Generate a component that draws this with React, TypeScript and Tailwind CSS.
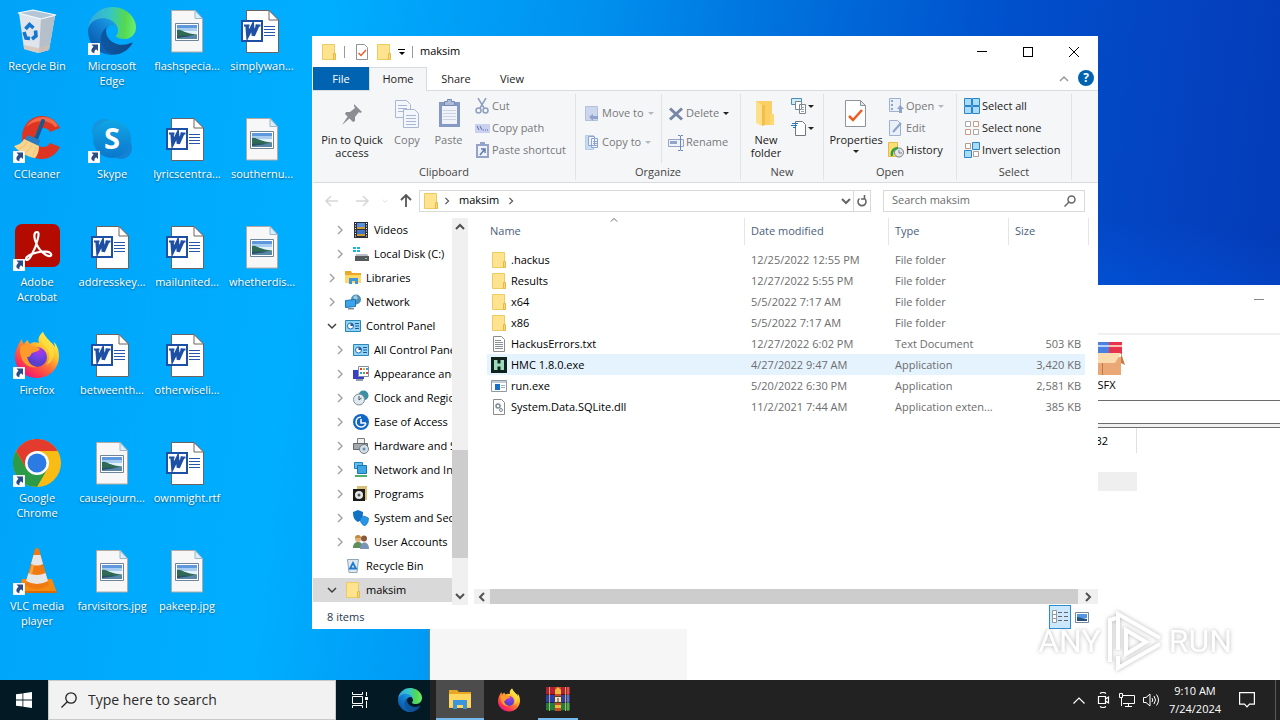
// src/App.tsx
import clsx from 'clsx'
import React from 'react'

type IconProps = { className?: string }

/* ---------- app logos ---------- */

const EdgeLogo: React.FC<IconProps> = ({ className }) => (
  <svg viewBox="0 0 256 256" className={className} aria-hidden="true">
    <defs>
      <linearGradient id="edgeDark" x1="60" y1="177" x2="240" y2="177" gradientUnits="userSpaceOnUse">
        <stop offset="0" stopColor="#0c59a4" />
        <stop offset="1" stopColor="#114a8b" />
      </linearGradient>
      <linearGradient id="edgeMid" x1="155" y1="100" x2="45" y2="220" gradientUnits="userSpaceOnUse">
        <stop offset="0" stopColor="#1b9de2" />
        <stop offset="0.4" stopColor="#1280d2" />
        <stop offset="1" stopColor="#0b5cae" />
      </linearGradient>
      <linearGradient id="edgeTop" x1="10" y1="90" x2="250" y2="110" gradientUnits="userSpaceOnUse">
        <stop offset="0" stopColor="#35a9e0" />
        <stop offset="0.45" stopColor="#36c6c4" />
        <stop offset="0.8" stopColor="#55d94f" />
        <stop offset="1" stopColor="#66eb6e" />
      </linearGradient>
    </defs>
    <g transform="translate(-4.63 -4.92)">
      <path
        fill="url(#edgeDark)"
        d="M235.68 195.46a93.73 93.73 0 0 1-10.54 4.71 101.87 101.87 0 0 1-35.9 6.46c-47.32 0-88.54-32.55-88.54-74.32A31.48 31.48 0 0 1 117.13 105c-42.8 1.8-53.8 46.4-53.8 72.53 0 73.88 68.09 81.37 82.76 81.37 7.91 0 19.84-2.3 27-4.56l1.31-.44a128.34 128.34 0 0 0 66.6-52.8 4 4 0 0 0-5.32-5.64Z"
      />
      <path
        fill="url(#edgeMid)"
        d="M110.34 246.34A79.2 79.2 0 0 1 87.6 225a80.72 80.72 0 0 1 29.53-120c3.12-1.47 8.45-4.13 15.54-4a32.35 32.35 0 0 1 25.69 13 31.88 31.88 0 0 1 6.36 18.66c0-.21 24.46-79.6-80-79.6-43.9 0-80 41.66-80 78.21a130.15 130.15 0 0 0 12.11 56 128 128 0 0 0 156.38 67.11 75.55 75.55 0 0 1-62.78-8Z"
      />
      <path
        fill="url(#edgeTop)"
        d="M156.94 153.78c-.81 1.05-3.3 2.5-3.3 5.66 0 2.61 1.7 5.12 4.72 7.23 14.38 10 41.49 8.68 41.56 8.68a59.56 59.56 0 0 0 30.27-8.35A61.38 61.38 0 0 0 260.63 114c.26-22.41-8-37.31-11.34-43.91C228.09 28.76 182.35 5 132.61 5a128 128 0 0 0-128 126.2c.48-36.54 36.8-66.05 80-66.05 3.5 0 23.46.34 42 10.07 16.34 8.58 24.9 18.94 30.85 29.21 6.18 10.67 7.28 24.15 7.28 29.52s-2.74 13.33-7.8 19.83Z"
      />
    </g>
  </svg>
)

const FirefoxLogo: React.FC<IconProps> = ({ className }) => (
  <svg viewBox="0 0 48 48" className={className} aria-hidden="true">
    <defs>
      <linearGradient id="ffBody" x1="38" y1="6" x2="10" y2="44" gradientUnits="userSpaceOnUse">
        <stop offset="0" stopColor="#fff44f" />
        <stop offset="0.3" stopColor="#ffc02e" />
        <stop offset="0.55" stopColor="#ff7139" />
        <stop offset="0.8" stopColor="#ff3750" />
        <stop offset="1" stopColor="#e31587" />
      </linearGradient>
      <radialGradient id="ffGlobe" cx="26" cy="20" r="12" gradientUnits="userSpaceOnUse">
        <stop offset="0" stopColor="#b833e1" />
        <stop offset="0.6" stopColor="#7542e5" />
        <stop offset="1" stopColor="#5b3fc8" />
      </radialGradient>
    </defs>
    <path
      fill="url(#ffBody)"
      d="M30 1c-5 4-5 8-4 11-3-1-7-1-9 1-1-1-2-2-2-4-2 1-3 2-4 4-1-1-2-2-2-5-4 5-7 12-7 18 0 12 10 21 22 21s22-9 22-22c0-6-2-11-5-14 0 2 1 3 1 5C39 11 33 8 30 1z"
    />
    <circle cx="24" cy="26" r="10" fill="url(#ffGlobe)" />
    <path fill="#ff9a2b" d="M7 16c4-3 9-3 12 0 3-1 6 0 8 2-2 3-6 3-8 4-2 2-1 4-5 4 1 5 4 9 10 10-9 2-18-5-17-20z" />
    <path fill="#ffdf3f" opacity="0.75" d="M30 1c-5 8 1 13 5 18 3 5 1 12-2 15 7-3 9-10 7-17C38 10 32 8 30 1z" />
  </svg>
)

const ChromeLogo: React.FC<IconProps> = ({ className }) => (
  <svg viewBox="0 0 48 48" className={className} aria-hidden="true">
    <circle cx="24" cy="24" r="24" fill="#f9bc15" />
    <path fill="#e33b2e" d="M24 24L3.2 12A24 24 0 0 1 44.8 12H24z" />
    <path fill="#2d9a48" d="M3.2 12A24 24 0 0 0 24 48L34.4 30 24 24 13.6 30z" />
    <path fill="#e33b2e" d="M3.2 12L13.6 30 24 12z" />
    <circle cx="24" cy="24" r="12" fill="#fff" />
    <circle cx="24" cy="24" r="9.5" fill="#2c7be5" />
  </svg>
)

const RecycleLogo: React.FC<IconProps> = ({ className }) => (
  <svg viewBox="0 0 48 48" className={className} aria-hidden="true">
    <path fill="#dfe5ea" d="M6 6L42 9 36 43 25 46 11 42z" />
    <path fill="#b4bfc9" d="M28 11L42 9 36 43 26 46z" />
    <path fill="#b5c7d6" d="M5 6L20 3 43 8 28 12z" stroke="#f7fbff" strokeWidth="1.2" />
    <path fill="#d6bfb0" opacity="0.7" d="M11 38L25 41 36 38 35 43 25 46 11 42z" />
    <g fill="none" stroke="#1476cf" strokeWidth="3.6">
      <path d="M12.500 22l4-4.500 4 3.500" />
      <path d="M11 25l2 6 4 .5" />
      <path d="M22.500 23.500l.5 5.500-4 3" />
    </g>
  </svg>
)

const CCleanerLogo: React.FC<IconProps> = ({ className }) => (
  <svg viewBox="0 0 48 48" className={className} aria-hidden="true">
    <path
      fill="#de3522"
      d="M47 13C43 5 36 1 29 1 17 1 9 11 9 23s8 21 20 21c7 0 14-4 18-12l-10-4c-2 3-4 4-7 4-5 0-8-4-8-9s3-10 8-10c3 0 6 1 7 4z"
    />
    <path fill="#f26a4b" d="M13 12C17 5 24 2 30 2c6 0 12 3 15 9l-3 1C37 5 23 4 13 12z" />
    <path d="M30 6L23 24" stroke="#1d588c" strokeWidth="4" strokeLinecap="round" />
    <path fill="#2b7bc0" d="M15 20l12 5-2 7-14-7z" />
    <path fill="#f8d48d" d="M11 24l15 7c0 6-2 10-4 12-8-1-16-6-21-12 4-1 8-3 10-7z" />
    <path fill="none" stroke="#e8bd74" strokeWidth="0.8" d="M14 27c-2 4-5 6-8 7M19 30c-2 4-4 6-7 8M23 32c-1 4-2 7-4 9" />
  </svg>
)

const SkypeLogo: React.FC<IconProps> = ({ className }) => (
  <svg viewBox="0 0 48 48" className={className} aria-hidden="true">
    <defs>
      <linearGradient id="skypeBlue" x1="0" y1="0" x2="0" y2="1">
        <stop offset="0" stopColor="#10a6e6" />
        <stop offset="1" stopColor="#0b77cc" />
      </linearGradient>
    </defs>
    <circle cx="16" cy="16" r="12" fill="#1495dc" />
    <circle cx="33" cy="33" r="11" fill="#1583d3" />
    <circle cx="24" cy="24" r="19" fill="url(#skypeBlue)" />
    <text x="24" y="34" textAnchor="middle" fontFamily="Open Sans, sans-serif" fontWeight="700" fontSize="29" fill="#fff">
      S
    </text>
  </svg>
)

const AcrobatLogo: React.FC<IconProps> = ({ className }) => (
  <svg viewBox="0 0 48 48" className={className} aria-hidden="true">
    <rect x="2" y="1" width="45" height="43" rx="7" fill="#b30b00" />
    <path
      fill="none"
      stroke="#fff"
      strokeWidth="2.2"
      d="M24 9c-3 0-3 4-2 8 2 7 6 12 11 15 4 2 6 1 5-1-1-3-8-3-14-1.500-6 1.500-11 4-11 6.500 0 2 3 1 5-3 3-5 6-13 7-18 .8-4 1-6-1-6z"
    />
  </svg>
)

const VlcLogo: React.FC<IconProps> = ({ className }) => (
  <svg viewBox="0 0 48 48" className={className} aria-hidden="true">
    <path fill="#f58a12" d="M9 32h30l5 14H6z" />
    <path fill="#d96a06" d="M6 44h38v2H6z" />
    <path fill="#f07a10" d="M22 2q2-2 4 0l10 36q-12 8-24 0z" />
    <path fill="#e6e6e6" d="M20.500 8h7l2.500 9q-6 3-12 0z" />
    <path fill="#e6e6e6" d="M15.500 26q8.500 4 17 0l2.500 8q-11 6-22 0z" />
    <path fill="#ffb254" opacity="0.7" d="M19 17l2 1-2 10-3-1z" />
  </svg>
)

const ImageFile: React.FC<IconProps> = ({ className }) => (
  <svg viewBox="0 0 48 48" className={className} aria-hidden="true">
    <path fill="#f7f7f7" stroke="#b5aaa3" d="M8.500 3.500H32l7.500 8v33.500h-31z" />
    <path fill="#d9eefc" stroke="#9fb6c6" d="M32 3.500v8h7.500z" />
    <path fill="#fff" stroke="#6f8496" d="M12.500 16.500h23v17h-23z" />
    <path fill="#5f98dc" d="M14 18h20v4H14z" />
    <path fill="#a9cdf0" d="M14 21h20v3H14z" />
    <path fill="#e4f0fa" d="M14 24h20v3H14z" />
    <path fill="#5a86a8" d="M14 28h20v4H14z" />
    <path fill="#2f6b54" d="M14 23c3-1 5 1 8 2s6 2 12 2.500V28c-6 0-9 2-20 2z" />
    <path fill="#2b4f63" d="M14 29q8-1 14 0l-14 2z" />
  </svg>
)

const WordFile: React.FC<IconProps> = ({ className }) => (
  <svg viewBox="0 0 48 48" className={className} aria-hidden="true">
    <path fill="#fff" stroke="#6a6460" d="M8.500 3.500H31l9.500 9.500v32.500h-32z" />
    <path fill="#fff" stroke="#6a6460" d="M31 3.500V13h9.500z" />
    <path stroke="#2a56a8" d="M26 19.500h11M26 22.500h11M26 25.500h11M26 28.500h11" />
    <path fill="#fff" stroke="#1d4fa5" strokeWidth="2" d="M4 14h20v20H4z" />
    <path fill="none" stroke="#1d4fa5" strokeWidth="3.400" d="M9 18l.8 10.500L14.500 19l.8 9.500L20 18" />
    <path stroke="#1d4fa5" strokeWidth="1.800" d="M6 18.500h5.500M17.500 18.500h5" />
  </svg>
)

const ShortcutBadge = () => (
  <svg viewBox="0 0 12 12" className="absolute bottom-0 left-0 size-3" aria-hidden="true">
    <path fill="#fff" stroke="#c9cdd4" strokeWidth="0.5" d="M0 0h12v12H0z" />
    <path fill="#2b4d87" d="M3.500 1.500H10V8L8 6.200C6.500 7.500 6 8.500 6.500 10.500 2.500 9 2.500 6.500 5.500 3.800z" />
  </svg>
)

const WinrarLogo: React.FC<IconProps> = ({ className }) => (
  <svg viewBox="0 0 24 24" className={className} aria-hidden="true">
    <path fill="#b01f35" d="M0 0h24v8H0z" />
    <path fill="#2a3fae" d="M0 8h24v8H0z" />
    <path fill="#1f7d42" d="M0 16h24v8H0z" />
    <path stroke="#000" strokeOpacity="0.45" d="M0 7.500h24M0 15.500h24M0 23.500h24" />
    <path stroke="#e0c15e" strokeOpacity="0.8" d="M3.500 0v24M19.500 0v24M22 0v24" />
    <path fill="#cc4a26" d="M9 0h6v24H9z" />
    <path fill="#f0b93c" d="M9 3l3-3 3 3v4H9zM9 18h6v3H9z" />
    <path fill="#e8e0d0" stroke="#5a3a20" d="M8.500 9.500h7v6h-7z" />
    <path stroke="#5a3a20" d="M12 11v4" />
  </svg>
)

/* ---------- small 16px icons ---------- */

const FolderIcon: React.FC<IconProps> = ({ className = 'size-4' }) => (
  <svg viewBox="0 0 16 16" className={className} aria-hidden="true">
    <path fill="#ffe38f" stroke="#eccb62" d="M1.500.5h12v15h-12z" />
    <path fill="#fbd76c" stroke="#e3ba4c" d="M12.500 9.500h2v6h-2z" />
  </svg>
)

const ExplorerIcon: React.FC<IconProps> = ({ className = 'size-4' }) => (
  <svg viewBox="0 0 24 24" className={className} aria-hidden="true">
    <path fill="#e8a723" d="M1 3h8l2 2h12v5H1z" />
    <path fill="#ffd75e" d="M1 7h22v14H1z" />
    <path fill="#3b94dc" d="M5 13h14v9h-4v-4H9v4H5z" />
    <path fill="#f8c544" d="M1 20h4v1H1zM19 20h4v1h-4z" />
  </svg>
)

const NAV_ICONS: Record<string, React.ReactNode> = {
  videos: (
    <>
      <path fill="#2c2f3a" d="M1 0h14v16H1z" />
      <path stroke="#fff" strokeDasharray="1 1.500" d="M2.500 1v14M13.500 1v14" />
      <path fill="#5b8fd9" d="M4 1h8v6H4z" />
      <path fill="#c99a36" d="M4 5h8v2H4zM4 12h8v2H4z" />
      <path fill="#3f74c6" d="M4 8h8v4H4z" />
    </>
  ),
  disk: (
    <>
      <path fill="#1fb3d8" d="M0 1h3v2H0zM4 1h3v2H4zM0 4h3v2H0zM4 4h3v2H4z" />
      <path fill="#b9bec2" d="M3 8h11l2 3H2z" />
      <path fill="#55595d" d="M2 10h14v5H2z" />
      <path fill="#5fe07a" d="M12 12h2v1h-2z" />
    </>
  ),
  libraries: (
    <>
      <path fill="#e9a92b" d="M0 1h6l1 2h9v4H0z" />
      <path fill="#ffd866" d="M0 5h16v8H0z" />
      <path fill="#3f97dd" d="M4 8h9v6h-3v-3H7v3H4z" />
    </>
  ),
  network: (
    <>
      <circle cx="11" cy="5.500" r="5" fill="#4f8fb5" />
      <path fill="#9bcbe0" d="M8 3l3-2 2 3-3 3z" />
      <path fill="#3aa5ea" stroke="#1c75b5" d="M.5 6.500l10-1v7l-10 1z" />
      <path fill="#7d8c96" d="M3 14h6v1.500H3z" />
    </>
  ),
  control: (
    <>
      <path fill="#8fd3f7" stroke="#2c87b8" d="M.5 2.500h15v11H.5z" />
      <circle cx="5.500" cy="8" r="3" fill="#fff" stroke="#2b6fae" />
      <path fill="#1d5b9b" d="M5.500 8V5a3 3 0 0 1 3 3z" />
      <path stroke="#1d5b9b" d="M10 5.500h4M10 8h4M10 10.500h4" />
    </>
  ),
  appearance: (
    <>
      <path fill="#3a3fc4" d="M0 4h11v9H0z" />
      <path fill="#fff" stroke="#7f8fa4" d="M5.500.5h10v10h-10z" />
      <path fill="#e23d3d" d="M7 2h2v2H7zM13 6h2v2h-2z" />
      <path fill="#f0b429" d="M10 2h2v2h-2z" />
      <path fill="#3b9be0" d="M13 2h2v2h-2zM7 6h2v2H7z" />
      <path fill="#4fae4a" d="M10 6h2v2h-2z" />
      <path fill="#8f9dab" d="M3 13h7v2H3z" />
    </>
  ),
  clock: (
    <>
      <circle cx="10.500" cy="5.500" r="5" fill="#3c8ea5" />
      <circle cx="6" cy="9.500" r="5.500" fill="#dfe8ee" stroke="#7e909c" />
      <path fill="none" stroke="#46545f" d="M6 6v4l2.500-2" />
    </>
  ),
  ease: (
    <>
      <circle cx="8" cy="8" r="8" fill="#1267c4" />
      <path fill="none" stroke="#fff" strokeWidth="1.500" d="M8 3a5 5 0 1 0 5 6M8 5v4h5" />
    </>
  ),
  hardware: (
    <>
      <path fill="#f2f2f2" stroke="#7c7c7c" d="M4.500.5h7v5h-7z" />
      <path fill="#a4a9ad" stroke="#62676b" d="M.5 5.500h14v6H.500z" />
      <circle cx="11" cy="11" r="4.500" fill="#d7dde2" stroke="#717d87" />
      <circle cx="11" cy="11" r="1.500" fill="#5c93c1" />
    </>
  ),
  internet: (
    <>
      <path fill="#66bff2" stroke="#1d83bf" d="M1.500.5h8v6h-8z" />
      <path fill="#3fa6e6" stroke="#1a76ae" d="M4.500 3.500h9v8h-9z" />
      <path fill="#4fae6a" d="M2 13h12v2H2z" />
    </>
  ),
  programs: (
    <>
      <path fill="#d9c07a" d="M4 0h10v14H4z" />
      <path fill="#1b1b1b" d="M0 3h12v12H0z" />
      <circle cx="6" cy="9" r="4" fill="#e6e6e6" />
      <circle cx="6" cy="9" r="1.500" fill="#555" />
    </>
  ),
  system: (
    <>
      <path fill="#1273c4" d="M0 2l5-2 5 2c0 5-1 8-5 10C1 10 0 7 0 2z" />
      <path fill="#2597e6" stroke="#0e62a8" strokeWidth="0.6" d="M7 8l4-2 4.500 2c0 4-1 6-4 8-3-2-4.500-4-4.500-8z" />
    </>
  ),
  users: (
    <>
      <circle cx="5" cy="5" r="3" fill="#e2b07c" />
      <path fill="#c38a38" d="M2 4a3 3 0 0 1 6 0z" />
      <path fill="#5c8f5a" d="M0 14c0-4 2-6 5-6s5 2 5 6z" />
      <circle cx="11" cy="4.500" r="3" fill="#8a5a3c" />
      <path fill="#7c93b8" d="M7 15c0-4 2-6.500 4.500-6.500S16 11 16 15z" />
    </>
  ),
  recycle: (
    <>
      <path fill="#dfe9f1" stroke="#93a5b3" d="M2.500 1.500h11l-1.500 13H4z" />
      <path fill="none" stroke="#1b79cf" strokeWidth="1.800" d="M8 5l3 5.500H5z" />
    </>
  ),
  folder: (
    <>
      <path fill="#ffe38f" stroke="#eccb62" d="M1.500.5h12v15h-12z" />
      <path fill="#fbd76c" stroke="#e3ba4c" d="M12.500 9.500h2v6h-2z" />
    </>
  ),
}

const FILE_ICONS: Record<string, React.ReactNode> = {
  folder: NAV_ICONS.folder,
  text: (
    <>
      <path fill="#fff" stroke="#8b8b8b" d="M2.500.5h8l3 3v12h-11z" />
      <path stroke="#8a8f94" d="M4 4.500h6M4 6.500h8M4 8.500h8M4 10.500h8M4 12.500h8" />
    </>
  ),
  hmc: (
    <>
      <path fill="#10221c" d="M0 0h16v16H0z" />
      <path fill="#9fd9bd" d="M3 3h3.500v3.500h3V3H13v10H9.500V9.500h-3V13H3z" />
    </>
  ),
  exe: (
    <>
      <path fill="#fff" stroke="#8f9aa5" d="M.5 2.500h15v11H.5z" />
      <path fill="#c5ced6" d="M1 3h14v2H1z" />
      <path fill="#1871c9" d="M4 6h5v6H4z" />
      <path stroke="#9fb1c0" d="M10 7.500h4M10 9.500h4" />
    </>
  ),
  dll: (
    <>
      <path fill="#fff" stroke="#8b8b8b" d="M2.500.5h8l3 3v12h-11z" />
      <circle cx="7" cy="7" r="2" fill="none" stroke="#7c8894" strokeWidth="1.500" />
      <circle cx="10" cy="11" r="1.500" fill="none" stroke="#7c8894" />
    </>
  ),
}

const Small = ({ children }: { children: React.ReactNode }) => (
  <svg viewBox="0 0 16 16" className="size-4 shrink-0" aria-hidden="true">
    {children}
  </svg>
)

const Caret = ({ className }: { className?: string }) => (
  <svg viewBox="0 0 6 3" className={clsx('h-[3px] w-1.5 shrink-0', className)} aria-hidden="true">
    <path fill="currentColor" d="M0 0h6L3 3z" />
  </svg>
)

const Chevron = ({ dir, className }: { dir: 'right' | 'left' | 'up' | 'down'; className?: string }) => {
  const paths = {
    right: 'M3 1l4 4-4 4',
    left: 'M7 1L3 5l4 4',
    up: 'M1 7l4-4 4 4',
    down: 'M1 3l4 4 4-4',
  }
  return (
    <svg viewBox="0 0 10 10" className={clsx('shrink-0', className)} fill="none" stroke="currentColor" aria-hidden="true">
      <path d={paths[dir]} />
    </svg>
  )
}

/* ---------- desktop ---------- */

type Shortcut = { name: string; icon: React.FC<IconProps>; link?: boolean }

const shortcuts: Shortcut[] = [
  { name: 'Recycle Bin', icon: RecycleLogo },
  { name: 'CCleaner', icon: CCleanerLogo, link: true },
  { name: 'Adobe Acrobat', icon: AcrobatLogo, link: true },
  { name: 'Firefox', icon: FirefoxLogo, link: true },
  { name: 'Google Chrome', icon: ChromeLogo, link: true },
  { name: 'VLC media player', icon: VlcLogo, link: true },
  { name: 'Microsoft Edge', icon: EdgeLogo, link: true },
  { name: 'Skype', icon: SkypeLogo, link: true },
  { name: 'addresskey...', icon: WordFile },
  { name: 'betweenth...', icon: WordFile },
  { name: 'causejourn...', icon: ImageFile },
  { name: 'farvisitors.jpg', icon: ImageFile },
  { name: 'flashspecia...', icon: ImageFile },
  { name: 'lyricscentra...', icon: WordFile },
  { name: 'mailunited...', icon: WordFile },
  { name: 'otherwiseli...', icon: WordFile },
  { name: 'ownmight.rtf', icon: WordFile },
  { name: 'pakeep.jpg', icon: ImageFile },
  { name: 'simplywan...', icon: WordFile },
  { name: 'southernu...', icon: ImageFile },
  { name: 'whetherdis...', icon: ImageFile },
]

const DesktopIcons = () => (
  <div className="grid w-max auto-cols-[75px] grid-flow-col grid-rows-[repeat(6,108px)] pt-[7px]">
    {shortcuts.map(({ name, icon: Icon, link }) => (
      <button key={name} className="flex flex-col items-center pr-px leading-[15px] text-white">
        <span className="relative mb-[3px] size-12">
          <Icon className="size-12" />
          {link && <ShortcutBadge />}
        </span>
        <span className="max-w-[70px] [text-shadow:0_1px_2px_rgba(0,0,0,0.5)]">{name}</span>
      </button>
    ))}
  </div>
)

/* ---------- ribbon ---------- */

const Group = ({ title, className, children }: { title: string; className: string; children: React.ReactNode }) => (
  <section className={clsx('flex h-[86px] flex-col border-r border-[#e2e3e4]', className)}>
    <div className="flex h-[71px]">{children}</div>
    <h2 className="text-center leading-[17px] text-[#444]">{title}</h2>
  </section>
)

const BigButton = ({
  label,
  icon,
  className,
  muted,
  caret,
}: {
  label: string
  icon: React.ReactNode
  className: string
  muted?: boolean
  caret?: boolean
}) => (
  <button
    className={clsx('flex flex-col items-center pt-1 leading-[13px]', muted ? 'text-[#77797c]' : 'text-[#222]', className)}
  >
    <svg viewBox="0 0 32 32" className="mb-[3px] size-8" aria-hidden="true">
      {icon}
    </svg>
    {label}
    {caret && <Caret className="mt-1" />}
  </button>
)

const SmallButton = ({
  label,
  icon,
  muted,
  caret,
  tall,
}: {
  label: string
  icon: React.ReactNode
  muted?: boolean
  caret?: 'dark' | 'light'
  tall?: boolean
}) => (
  <button
    className={clsx(
      'flex items-center gap-[2px] whitespace-nowrap',
      tall ? 'h-[29px]' : 'h-[22px]',
      muted ? 'text-[#77797c]' : 'text-[#222]'
    )}
  >
    <Small>{icon}</Small>
    {label}
    {caret && <Caret className={clsx('ml-0.5', caret === 'dark' ? 'text-[#222]' : 'text-[#b5b7ba]')} />}
  </button>
)

const Ribbon = () => (
  <div className="flex h-[92px] border-b border-[#d9dadb] bg-[#f5f6f7] pt-[3px]">
    <Group title="Clipboard" className="w-[263px]">
      <BigButton
        label="Pin to Quick access"
        className="w-[78px]"
        icon={
          <g fill="#8a8d91">
            <path d="M18 6l8 8-2 1-1-1-4 5v4l-2 1-8-8 1-2h4l5-4-1-2z" />
            <path d="M12 18l2 2-8 7z" />
          </g>
        }
      />
      <BigButton
        label="Copy"
        muted
        className="w-8"
        icon={
          <g fill="#f3f6fb" stroke="#a9b8d2">
            <path d="M4.500 2.500h11l4 4v13h-15z" />
            <path d="M7 7.500h9M7 10.500h9M7 13.500h9" />
            <path d="M12.500 11.500h11l4 4v14h-15z" />
            <path d="M15 17.500h10M15 20.500h10M15 23.500h10M15 26.500h10" />
          </g>
        }
      />
      <BigButton
        label="Paste"
        muted
        className="w-[51px]"
        icon={
          <>
            <path fill="#8599c2" d="M6 4h21v25H6z" />
            <path fill="#f0f4fa" d="M9 8h15v18H9z" />
            <path fill="#aebcd5" stroke="#7288b5" d="M11.500 3.500h3v-2h4v2h3v4h-10z" />
            <path stroke="#c9d3e5" d="M10 12.500h13M10 15.500h13M10 18.500h13M10 21.500h13" />
          </>
        }
      />
      <div className="flex flex-col pt-px">
        <SmallButton
          label="Cut"
          muted
          icon={
            <g fill="none" stroke="#8f9fc0" strokeWidth="1.500">
              <path d="M4 0l6 10M12 0L6 10" />
              <circle cx="4.500" cy="12.500" r="2.500" />
              <circle cx="11.500" cy="12.500" r="2.500" />
            </g>
          }
        />
        <SmallButton
          label="Copy path"
          muted
          icon={
            <>
              <path fill="#c9d1ee" d="M1 4h15v9H1z" />
              <path stroke="#5d6cae" d="M3 6l2 4M6 6l2 4M9 10h1M11 10h1M13 10h1" />
            </>
          }
        />
        <SmallButton
          label="Paste shortcut"
          muted
          icon={
            <>
              <path fill="#eef2f9" stroke="#93a4c8" strokeWidth="2" d="M3 3h11v12H3z" />
              <path fill="#93a4c8" d="M6 0h5v3H6z" />
              <path fill="none" stroke="#5f78ae" strokeWidth="1.500" d="M6 13l4-5M7 7h4v4" />
            </>
          }
        />
      </div>
    </Group>

    <Group title="Organize" className="w-[165px]">
      <div className="flex w-[86px] flex-col border-r border-[#e2e3e4] pt-[5px] pl-2">
        <SmallButton
          label="Move to"
          muted
          tall
          caret="light"
          icon={
            <>
              <path fill="#ccd6ec" stroke="#b3c0dc" d="M1.500.5h12v14h-12z" />
              <path fill="#8fa2ca" d="M5 11l4-3v2h5v3H9v2z" />
            </>
          }
        />
        <SmallButton
          label="Copy to"
          muted
          tall
          caret="light"
          icon={
            <>
              <path fill="#c9dcf3" stroke="#b7cbe6" d="M1.500.5h8v14h-8z" />
              <path fill="#f1f5fb" stroke="#8ea6cf" d="M4.500 1.500h6v9h-6zM7.500 3.500h6v9h-6z" />
              <path stroke="#8ea6cf" d="M9 6.500h4M9 8.500h4M9 10.500h4" />
            </>
          }
        />
      </div>
      <div className="flex flex-col pt-[5px] pl-1.5">
        <SmallButton
          label="Delete"
          muted
          tall
          caret="dark"
          icon={<path stroke="#7686a5" strokeWidth="3" d="M2 2.500l12 11M14 2.500l-12 11" />}
        />
        <SmallButton
          label="Rename"
          muted
          tall
          icon={
            <>
              <path fill="#eef2f9" stroke="#93a4c8" d="M.5 4.500h15v7H.5z" />
              <path fill="#93a4c8" d="M2 6h7v3H2z" />
              <path fill="none" stroke="#7287b4" d="M10 .5h2l.5.5.5-.5h2M12.500 1v14M10 15.500h2l.5-.5.5.5h2" />
            </>
          }
        />
      </div>
    </Group>

    <Group title="New" className="w-[83px]">
      <BigButton
        label="New folder"
        className="w-[50px]"
        icon={
          <>
            <path fill="#f9cf66" d="M6 3h16v24H10z" />
            <path fill="#ffe08a" d="M6 3l6 4v21l-6-3z" />
            <path fill="#f3bf4c" d="M12 7h3v20l-3 1z" />
            <path fill="#ffd970" d="M20 16h4v11h-4z" />
          </>
        }
      />
      <div className="flex flex-col pt-px text-[#222]">
        <button aria-label="New item" className="flex h-[22px] items-center gap-px">
          <Small>
            <path fill="#cfeaf8" stroke="#4d8fb4" d="M.5.5h10v6H.5z" />
            <path fill="#fff" stroke="#7a8791" d="M4.500 3.500h6v8h-6zM8.500 6.500h6v9h-6z" />
            <path stroke="#9aa5ae" d="M10 9.500h3M10 11.500h3M10 13.500h3" />
          </Small>
          <Caret />
        </button>
        <button aria-label="Easy access" className="flex h-[22px] items-center gap-px">
          <Small>
            <path fill="#fff" stroke="#6f7880" d="M4.500 1.500h7l3 3v11h-10z" />
            <path stroke="#2477bb" d="M1 3.500h6M0 5.500h6M2 7.500h3" />
          </Small>
          <Caret />
        </button>
      </div>
    </Group>

    <Group title="Open" className="w-[133px]">
      <BigButton
        label="Properties"
        caret
        className="w-[64px]"
        icon={
          <>
            <path fill="#fff" stroke="#8e9499" d="M5.500 2.500h15l5 5v21h-20z" />
            <path fill="#dbe6f0" stroke="#8e9499" d="M20.500 2.500v5h5z" />
            <path fill="none" stroke="#f05a22" strokeWidth="2.500" d="M9 18l4 4 9-10" />
          </>
        }
      />
      <div className="flex flex-col pt-px">
        <SmallButton
          label="Open"
          muted
          caret="light"
          icon={
            <>
              <path fill="#eaf0f8" stroke="#9fb0cf" d="M1.500.5h11v13h-11z" />
              <path fill="#8fa3cb" d="M3 2h2v2H3zM3 6h2v2H3zM3 10h2v2H3zM12 7l4 4h-2v4h-3v-4H9z" />
            </>
          }
        />
        <SmallButton
          label="Edit"
          muted
          icon={
            <>
              <path fill="#eaf0f8" stroke="#9fb0cf" d="M1.500.5h8l3 3v12h-11z" />
              <path stroke="#8fa3cb" strokeWidth="2" d="M5 12l8-9" />
            </>
          }
        />
        <SmallButton
          label="History"
          icon={
            <>
              <path fill="#ffdf75" stroke="#e5ba48" d="M.5.5h9v14h-9z" />
              <circle cx="11" cy="10.500" r="4.500" fill="#e4e7ea" stroke="#777e85" />
              <path fill="none" stroke="#777e85" d="M11 8v3h3" />
              <path fill="none" stroke="#35a13d" strokeWidth="2.500" d="M4 14c-1-5 2-8 6-8" />
            </>
          }
        />
      </div>
    </Group>

    <Group title="Select" className="w-[115px]">
      <div className="flex flex-col pt-px pl-[7px]">
        <SmallButton
          label="Select all"
          icon={
            <path fill="#a9dcfa" stroke="#2a86c8" d="M.5.5h7v7h-7zM8.500.5h7v7h-7zM.5 8.500h7v7h-7zM8.500 8.500h7v7h-7z" />
          }
        />
        <SmallButton
          label="Select none"
          icon={
            <g fill="#fff">
              <path stroke="#a9a9a9" d="M1.500 1.500h5v5h-5zM9.500 9.500h5v5h-5z" />
              <path stroke="#c99a82" d="M9.500 1.500h5v5h-5zM1.500 9.500h5v5h-5z" />
            </g>
          }
        />
        <SmallButton
          label="Invert selection"
          icon={
            <>
              <path fill="#fff" stroke="#b59a90" d="M1.500 1.500h5v5h-5zM9.500 9.500h5v5h-5z" />
              <path fill="#a9dcfa" stroke="#2a86c8" d="M8.500.5h7v7h-7zM.5 8.500h7v7h-7z" />
            </>
          }
        />
      </div>
    </Group>
  </div>
)

/* ---------- navigation tree ---------- */

type NavItem = { label: string; icon: string; depth: 1 | 2; open?: boolean; leaf?: boolean; active?: boolean }

const navItems: NavItem[] = [
  { label: 'Videos', icon: 'videos', depth: 2 },
  { label: 'Local Disk (C:)', icon: 'disk', depth: 2 },
  { label: 'Libraries', icon: 'libraries', depth: 1 },
  { label: 'Network', icon: 'network', depth: 1 },
  { label: 'Control Panel', icon: 'control', depth: 1, open: true },
  { label: 'All Control Panel Items', icon: 'control', depth: 2 },
  { label: 'Appearance and Personalization', icon: 'appearance', depth: 2 },
  { label: 'Clock and Region', icon: 'clock', depth: 2 },
  { label: 'Ease of Access', icon: 'ease', depth: 2 },
  { label: 'Hardware and Sound', icon: 'hardware', depth: 2 },
  { label: 'Network and Internet', icon: 'internet', depth: 2 },
  { label: 'Programs', icon: 'programs', depth: 2 },
  { label: 'System and Security', icon: 'system', depth: 2 },
  { label: 'User Accounts', icon: 'users', depth: 2 },
  { label: 'Recycle Bin', icon: 'recycle', depth: 1, leaf: true },
  { label: 'maksim', icon: 'folder', depth: 1, open: true, active: true },
]

const NavTree = () => (
  <nav className="w-[139px] overflow-hidden">
    <ul>
      {navItems.map(item => (
        <li key={item.label}>
          <button
            className={clsx(
              'flex h-6 w-full items-center overflow-hidden whitespace-nowrap',
              item.depth === 2 ? 'pl-[22px]' : 'pl-[14px]',
              item.active && 'bg-[#d9d9d9]'
            )}
          >
            <span className="flex w-[18px] shrink-0">
              {!item.leaf && (
                <Chevron
                  dir={item.open ? 'down' : 'right'}
                  className={clsx('size-2.5 stroke-[1.5]', item.open ? 'text-[#404040]' : 'text-[#a6a6a6]')}
                />
              )}
            </span>
            <Small>{NAV_ICONS[item.icon]}</Small>
            <span className="ml-[5px]">{item.label}</span>
          </button>
        </li>
      ))}
    </ul>
  </nav>
)

/* ---------- file list ---------- */

const files = [
  { name: '.hackus', date: '12/25/2022 12:55 PM', type: 'File folder', size: '', icon: 'folder' },
  { name: 'Results', date: '12/27/2022 5:55 PM', type: 'File folder', size: '', icon: 'folder' },
  { name: 'x64', date: '5/5/2022 7:17 AM', type: 'File folder', size: '', icon: 'folder' },
  { name: 'x86', date: '5/5/2022 7:17 AM', type: 'File folder', size: '', icon: 'folder' },
  { name: 'HackusErrors.txt', date: '12/27/2022 6:02 PM', type: 'Text Document', size: '503 KB', icon: 'text' },
  { name: 'HMC 1.8.0.exe', date: '4/27/2022 9:47 AM', type: 'Application', size: '3,420 KB', icon: 'hmc', hover: true },
  { name: 'run.exe', date: '5/20/2022 6:30 PM', type: 'Application', size: '2,581 KB', icon: 'exe' },
  { name: 'System.Data.SQLite.dll', date: '11/2/2021 7:44 AM', type: 'Application exten...', size: '385 KB', icon: 'dll' },
]

const FileList = () => (
  <table className="ml-[13px] w-[602px] table-fixed text-left leading-4 whitespace-nowrap">
    <colgroup>
      <col className="w-[258px]" />
      <col className="w-[144px]" />
      <col className="w-[120px]" />
      <col className="w-[76px]" />
      <col />
    </colgroup>
    <thead>
      <tr className="h-[31px] align-top text-[#4c607a]">
        {['Name', 'Date modified', 'Type', 'Size'].map(col => (
          <th key={col} className="p-0 font-normal">
            <div
              className={clsx(
                'relative h-[27px] leading-[26px]',
                col === 'Name' ? 'border-r border-[#e5e5e5] pl-[3px]' : 'pl-1.5',
                (col === 'Date modified' || col === 'Type') && 'border-r border-[#e5e5e5]'
              )}
            >
              {col}
              {col === 'Name' && <Chevron dir="up" className="absolute -top-0.5 left-[123px] size-2 text-[#444]" />}
            </div>
          </th>
        ))}
        <th className="p-0">
          <div className="h-[27px] border-r border-[#e5e5e5]" />
        </th>
      </tr>
    </thead>
    <tbody>
      {files.map(file => {
        const cell = clsx('pt-px pb-0', file.hover && 'bg-[#e5f3ff]')
        return (
          <tr key={file.name} className="h-[21px] text-[#6d6d6d]">
            <td className={clsx(cell, 'px-0')}>
              <div className="flex items-center gap-1 pl-1 text-black">
                <Small>{FILE_ICONS[file.icon]}</Small>
                {file.name}
              </div>
            </td>
            <td className={clsx(cell, 'pr-0 pl-1.5')}>{file.date}</td>
            <td className={clsx(cell, 'pr-0 pl-1.5')}>{file.type}</td>
            <td className={clsx(cell, 'pr-1 pl-0 text-right')}>{file.size}</td>
            <td className="p-0" />
          </tr>
        )
      })}
    </tbody>
  </table>
)

/* ---------- explorer window ---------- */

const ExplorerWindow = () => (
  <main className="absolute top-9 left-[312px] flex w-[786px] flex-col bg-white pl-px text-black">
    <header className="flex h-[31px] items-center pr-px">
      <FolderIcon className="ml-2 size-4" />
      <span className="mx-[7px] h-3 w-px bg-[#999]" />
      <svg viewBox="0 0 16 16" className="ml-0.5 size-4" aria-hidden="true">
        <path fill="#fff" stroke="#8e9499" d="M2.500.5h8l3 3v12h-11z" />
        <path fill="none" stroke="#e5602c" strokeWidth="1.500" d="M4.500 9l2.500 2.500L12 6" />
      </svg>
      <FolderIcon className="ml-1.5 size-4" />
      <button aria-label="Customize Quick Access Toolbar" className="ml-1.5 flex flex-col items-center gap-0.5">
        <span className="h-px w-[7px] bg-black" />
        <Caret />
      </button>
      <span className="mx-[7px] h-3 w-px bg-[#999]" />
      <h1>maksim</h1>
      <div className="ml-auto flex">
        <button aria-label="Minimize" className="flex h-[31px] w-[46px] items-center justify-center">
          <span className="h-px w-[10px] bg-black" />
        </button>
        <button aria-label="Maximize" className="flex h-[31px] w-[45px] items-center justify-center">
          <span className="size-[10px] border border-black" />
        </button>
        <button aria-label="Close" className="flex h-[31px] w-[47px] items-center justify-center">
          <svg viewBox="0 0 10 10" className="size-[10px]" stroke="#000" aria-hidden="true">
            <path d="M0 0l10 10M10 0L0 10" />
          </svg>
        </button>
      </div>
    </header>

    <div className="flex h-6 border-b border-[#dadbdc] text-[#222]">
      <button className="w-14 bg-[#0063b1] pt-px text-white">File</button>
      <button className="-mb-px w-[58px] border border-b-0 border-[#dadbdc] bg-[#f5f6f7]">Home</button>
      <button className="w-[58px] pt-px">Share</button>
      <button className="w-[54px] pt-px">View</button>
      <button aria-label="Minimize the Ribbon" className="mr-[9px] ml-auto text-[#9a9a9a]">
        <Chevron dir="up" className="size-2.5 stroke-[1.5]" />
      </button>
      <button
        aria-label="Help"
        className="mt-[3px] mr-1 size-4 rounded-full bg-[#0063b1] text-xs leading-4 font-bold text-white"
      >
        ?
      </button>
    </div>

    <Ribbon />

    <div className="flex h-[35px] items-center pr-[13px]">
      <svg viewBox="0 0 14 12" className="ml-3 h-3 w-3.5" fill="none" stroke="#d6d6d6" strokeWidth="1.500" aria-hidden="true">
        <path d="M6 1L1 6l5 5M1 6h12" />
      </svg>
      <svg viewBox="0 0 14 12" className="ml-4 h-3 w-3.5" fill="none" stroke="#d6d6d6" strokeWidth="1.500" aria-hidden="true">
        <path d="M8 1l5 5-5 5M13 6H1" />
      </svg>
      <Chevron dir="down" className="ml-[13px] size-1.5 text-[#cfcfcf]" />
      <button aria-label="Up" className="ml-3">
        <svg viewBox="0 0 12 13" className="h-[13px] w-3" fill="none" stroke="#555" strokeWidth="1.800" aria-hidden="true">
          <path d="M1 6l5-5 5 5M6 1v12" />
        </svg>
      </button>
      <div className="ml-[7px] flex h-[22px] flex-1 items-center border border-[#d9d9d9]">
        <FolderIcon className="ml-[3px] size-4" />
        <Chevron dir="right" className="ml-1 size-2 stroke-[1.5] text-[#555]" />
        <button className="mx-2">maksim</button>
        <Chevron dir="right" className="size-2 stroke-[1.5] text-[#555]" />
        <Chevron dir="down" className="mr-0.5 ml-auto size-2.5 stroke-2 text-[#666]" />
        <button aria-label="Refresh" className="flex h-full items-center border-l border-[#d9d9d9] px-[3px]">
          <svg viewBox="0 0 10 12" className="h-3 w-2.5" fill="none" stroke="#666" strokeWidth="1.600" aria-hidden="true">
            <path d="M7.500 3.500a4 4 0 1 1-5 0M1.500 0h0M7.500 0v4H4" />
          </svg>
        </button>
      </div>
      <label className="ml-3 flex h-[22px] w-[202px] items-center border border-[#d9d9d9] px-2">
        <input
          type="search"
          aria-label="Search maksim"
          placeholder="Search maksim"
          className="min-w-0 flex-1 outline-none placeholder:text-[#6d6d6d]"
        />
        <svg viewBox="0 0 12 12" className="size-3" fill="none" stroke="#666" strokeWidth="1.500" aria-hidden="true">
          <circle cx="7.500" cy="4.500" r="3.500" />
          <path d="M5 7l-4.500 4.500" />
        </svg>
      </label>
    </div>

    <div className="flex h-[387px]">
      <NavTree />
      <div className="flex w-4 flex-col items-center bg-[#f0f0f0] text-[#505050]">
        <Chevron dir="up" className="my-1 size-2.5 stroke-2" />
        <div className="flex-1" />
        <div className="h-[108px] w-full bg-[#cdcdcd]" />
        <div className="h-[33px]" />
        <Chevron dir="down" className="mb-1 size-2.5 stroke-2" />
      </div>
      <div className="ml-[6px] flex flex-1 flex-col">
        <FileList />
        <div className="mt-auto mb-px flex h-[15px] items-center bg-[#f0f0f0] text-[#505050]">
          <div className="flex w-4 justify-center">
            <Chevron dir="left" className="size-2.5 stroke-2" />
          </div>
          <div className="h-full flex-1 bg-[#cdcdcd]" />
          <div className="flex w-5 justify-center">
            <Chevron dir="right" className="size-2.5 stroke-2" />
          </div>
        </div>
      </div>
    </div>

    <footer className="flex h-6 items-center pr-px pl-3.5 text-[#26364d]">
      <span>8 items</span>
      <button
        aria-label="Details view"
        className="ml-auto flex h-6 w-[22px] items-center justify-center border border-[#2a8dd4] bg-[#cce8ff]"
      >
        <svg viewBox="0 0 16 14" className="h-3.5 w-4" aria-hidden="true">
          <path fill="#fff" stroke="#999" d="M.5.5h4v4h-4zM.5 4.500h4v4h-4zM.5 8.500h4v4h-4z" />
          <path stroke="#666" strokeDasharray="4 2" d="M6 2.500h10M6 6.500h10M6 10.500h10" />
        </svg>
      </button>
      <button aria-label="Thumbnail view" className="mr-2 ml-1">
        <svg viewBox="0 0 14 11" className="h-[11px] w-3.5" aria-hidden="true">
          <path fill="#fff" stroke="#7b8794" d="M.5.5h13v10H.5z" />
          <path fill="#4f97df" d="M2 2h10v4H2z" />
          <path fill="#25507f" d="M2 5l10 2v2H2z" />
        </svg>
      </button>
    </footer>
  </main>
)

/* ---------- archiver window behind the explorer ---------- */

const ArchiverWindow = () => (
  <section className="absolute top-[285px] right-0 bottom-0 left-[429px] flex flex-col border-l border-[#6f8794] bg-white">
    <div className="flex h-[48px] justify-end pt-3.5 pr-4">
      <span className="h-px w-[10px] bg-[#888]" />
    </div>
    <div className="flex h-[68px] border-t-2 border-b border-t-[#f0f0f0] border-b-[#6d6d6d] pt-1.5 pl-[657px]">
      <button className="flex flex-col items-center text-black">
        <svg viewBox="0 0 39 34" className="mb-0.5 h-[34px] w-[39px]" aria-hidden="true">
          <path fill="#4b7fe0" d="M8 1h14v12H8z" />
          <path fill="#e6344c" d="M22 1h13v12H22z" />
          <path fill="#bcd2ff" d="M8 4h14v2H8z" />
          <path fill="#ffc1b0" d="M22 4h13v2H22z" />
          <path fill="#eba877" d="M5 16h29v18H5z" />
          <path fill="#c57a44" d="M15 16h1v18h-1z" />
          <path fill="#fbdcae" d="M5 12h29l-6 10H1z" />
          <path fill="#c57a44" d="M34 12l4 12-4-2z" />
        </svg>
        SFX
      </button>
    </div>
    <div className="h-[23px] border-b border-[#6d6d6d]" />
    <div className="h-1 border-b border-[#6d6d6d] bg-[#f0f0f0]" />
    <div className="flex h-[25px] w-[707px] items-center justify-end border-r border-[#e0e0e0] pt-px pr-7">CRC32</div>
    <div className="mt-[19px] h-[19px] w-[707px] bg-[#efefef]" />
    <div className="w-[257px] flex-1 bg-[#f6f6f6]" />
  </section>
)

const Watermark = () => (
  <div className="absolute right-12 bottom-2 flex items-center gap-1.5 font-['Roboto',sans-serif] text-[32px] text-white [filter:drop-shadow(0_0_2px_rgba(120,120,120,0.55))]">
    <span>ANY</span>
    <svg viewBox="0 0 56 62" className="h-[62px] w-14" fill="none" stroke="#fff" strokeWidth="4" aria-hidden="true">
      <path d="M3 52V10l6-2M11 40V4l42 24" />
      <path d="M19 20v24l20-12z" />
      <path d="M11 46v12l42-24" />
    </svg>
    <span>RUN</span>
  </div>
)

/* ---------- taskbar ---------- */

const Taskbar = () => (
  <footer className="flex h-10 bg-[linear-gradient(to_right,#031a24_430px,#222_430px)] text-white">
    <button aria-label="Start" className="flex w-12 items-center justify-center">
      <svg viewBox="0 0 16 16" className="size-4" fill="#fff" aria-hidden="true">
        <path d="M0 2.300l6.500-.9v6.200H0zM7.300 1.300L16 0v7.600H7.300zM0 8.400h6.500v6.200L0 13.700zM7.300 8.400H16V16l-8.700-1.300z" />
      </svg>
    </button>
    <label className="flex w-72 items-center gap-[11px] border border-[#c9c9c9] bg-[#f2f2f2] pl-3">
      <svg viewBox="0 0 16 16" className="size-4" fill="none" stroke="#222" strokeWidth="1.300" aria-hidden="true">
        <circle cx="10" cy="6" r="5.200" />
        <path d="M6.300 9.700L.5 15.500" />
      </svg>
      <input
        type="search"
        aria-label="Type here to search"
        placeholder="Type here to search"
        className="min-w-0 flex-1 text-sm outline-none placeholder:text-[#2b2b2b]"
      />
    </label>
    <button aria-label="Task View" className="flex w-12 items-center justify-center">
      <svg viewBox="0 0 16 16" className="size-4" fill="none" stroke="#fff" aria-hidden="true">
        <path d="M.5 0v2.500h10V0M.5 4.500h10v7H.5zM.5 16v-2.500h10V16M14.500 0v4M14.500 9v7" />
        <path fill="#fff" stroke="none" d="M13 5h3v3h-3z" />
      </svg>
    </button>
    <button aria-label="Microsoft Edge" className="flex w-[52px] items-center justify-center">
      <EdgeLogo className="size-6" />
    </button>
    <button aria-label="File Explorer" className="flex w-12 items-center justify-center border-b-2 border-[#76b9ed] bg-[#4c4c4c]">
      <ExplorerIcon className="size-6" />
    </button>
    <button aria-label="Firefox" className="flex w-[50px] items-center justify-center">
      <FirefoxLogo className="size-6" />
    </button>
    <button aria-label="WinRAR" className="mx-1 flex w-10 items-center justify-center border-b-2 border-[#76b9ed]">
      <WinrarLogo className="size-6" />
    </button>

    <div className="ml-auto flex items-center">
      <button aria-label="Show hidden icons">
        <svg viewBox="0 0 12 7" className="h-[7px] w-3" fill="none" stroke="#fff" strokeWidth="1.200" aria-hidden="true">
          <path d="M.5 6.500L6 1l5.500 5.500" />
        </svg>
      </button>
      <svg viewBox="0 0 14 16" className="ml-3 h-4 w-3.5" fill="none" stroke="#fff" strokeWidth="1.200" aria-hidden="true">
        <path d="M3 1.500q3-2 6 0M3 14.500q3 2 6 0M1.500 4.500h7v7h-7zM8.500 7l3-2v6l-3-2" />
      </svg>
      <svg viewBox="0 0 16 14" className="ml-2 h-3.5 w-4" fill="none" stroke="#fff" aria-hidden="true">
        <path d="M4 2.500h11.500v8H4M.5.500h3v4h-3zM2.500 5v8M6 13.500h7M9.500 11v2.500" />
      </svg>
      <svg viewBox="0 0 17 14" className="ml-2 h-3.5 w-[17px]" fill="none" stroke="#fff" aria-hidden="true">
        <path d="M.5 4.500h2.500l4-3.500v12L3 9.500H.5zM9 5q1.500 2 0 4M11 3q3 4 0 8M13.500 1.500q4 5.500 0 11" />
      </svg>
      <div className="w-[70px] text-center leading-[18px]">
        <p>9:10 AM</p>
        <p>7/24/2024</p>
      </div>
      <button aria-label="Notifications" className="ml-[9px]">
        <svg viewBox="0 0 16 16" className="size-4" fill="none" stroke="#fff" strokeWidth="1.200" aria-hidden="true">
          <path d="M.6.600h14.800v11.500H10.500L8 14.800 5.500 12.100H.6z" />
        </svg>
      </button>
      <span className="mr-1 ml-5 h-10 w-px bg-[#5a5a5a]" />
    </div>
  </footer>
)

const App: React.FC = () => {
  return (
    <div className="flex min-h-screen flex-col overflow-hidden font-['Open_Sans','Noto_Sans',sans-serif] text-[11px]">
      <div className="relative flex-1 overflow-hidden bg-[radial-gradient(ellipse_at_82%_50%,rgba(0,96,240,0.6),transparent_26%),linear-gradient(97deg,#00a3f8_0%,#00aeff_24%,#0090ee_44%,#0074de_56%,#0050cc_74%,#0442c0_88%,#0439b4_100%)]">
        <DesktopIcons />
        <ArchiverWindow />
        <ExplorerWindow />
        <Watermark />
      </div>
      <Taskbar />
    </div>
  )
}

export default App
